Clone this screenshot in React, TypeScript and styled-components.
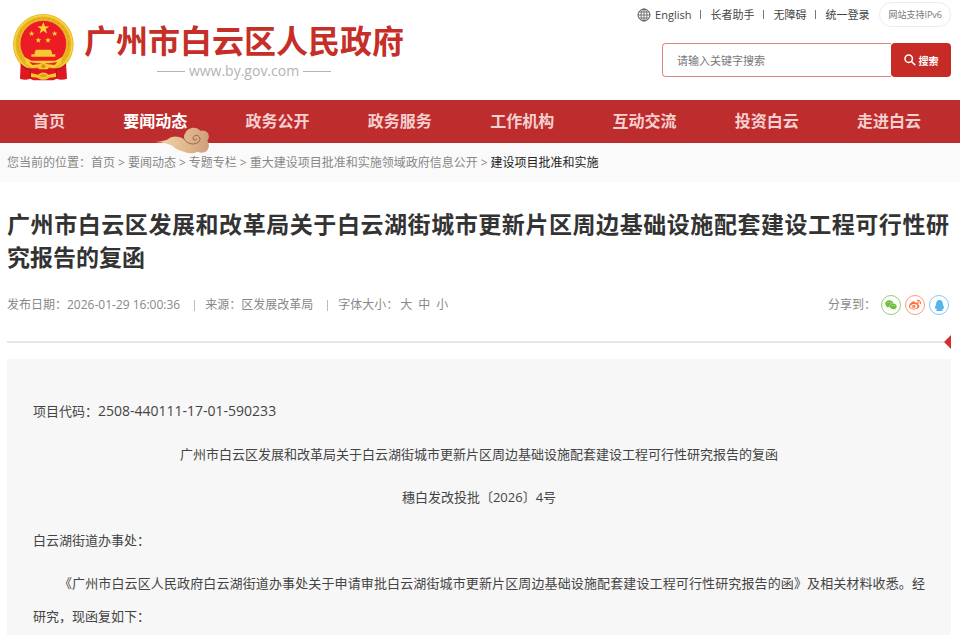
import React from "react";
import styled, { createGlobalStyle } from "styled-components";
import { FaWeixin, FaWeibo, FaQq } from "react-icons/fa";

const GlobalStyle = createGlobalStyle`
  * { box-sizing: border-box; }
  body {
    margin: 0;
    background: #fff;
    color: #444;
    font-family: "Open Sans", "Noto Sans CJK SC", sans-serif;
    font-size: 12px;
    line-height: 20px;
  }
  a { color: inherit; text-decoration: none; }
  button, input { font-family: inherit; }
`;

const Header = styled.header`
  display: flex;
  justify-content: space-between;
  height: 100px;
  padding: 0 9px 0 12px;
`;

const Brand = styled.a`
  display: flex;
  align-items: flex-start;
  gap: 9px;
  padding-top: 13px;
`;

const BrandText = styled.div`
  display: flex;
  flex-direction: column;
  align-items: center;
  padding-top: 8px;
`;

const SiteName = styled.strong`
  color: #c62f28;
  font-size: 32px;
  font-weight: 700;
  line-height: 40px;
  white-space: nowrap;
`;

const SiteUrl = styled.span`
  display: flex;
  align-items: center;
  gap: 4px;
  color: #b3b3b3;
  font-size: 14px;
  line-height: 20px;

  &::before, &::after {
    content: "";
    width: 28px;
    height: 1px;
    background: #b3b3b3;
  }
`;

const HeaderSide = styled.div`
  display: flex;
  flex-direction: column;
  align-items: flex-end;
  gap: 16px;
  padding-top: 2px;
`;

const Tools = styled.nav`
  display: flex;
  align-items: center;
  height: 25px;
  color: #444;
  font-size: 11px;
  white-space: nowrap;
`;

const ToolLink = styled.a`
  display: flex;
  align-items: center;
  gap: 4px;
`;

const ToolBar = styled.span`
  width: 1px;
  height: 9px;
  margin: 0 9px;
  background: #777;
`;

const Ipv6 = styled.a`
  height: 25px;
  margin-left: 10px;
  padding: 0 8px;
  border: 1px solid #ececec;
  border-radius: 13px;
  color: #777;
  font-size: 9px;
  line-height: 23px;
`;

const Search = styled.form`
  display: flex;
  width: 289px;
  height: 34px;
  margin: 0;
`;

const SearchInput = styled.input`
  flex: 1;
  min-width: 0;
  padding: 0 14px;
  border: 1px solid #dc8580;
  border-right: 0;
  border-radius: 4px 0 0 4px;
  outline: 0;
  background: #fff;
  color: #333;
  font-size: 11px;

  &::placeholder { color: #777; opacity: 1; }
`;

const SearchButton = styled.button`
  display: flex;
  align-items: center;
  justify-content: center;
  gap: 3px;
  width: 60px;
  padding: 0;
  border: 0;
  border-radius: 4px;
  background: #c62b25;
  color: #fff;
  font-size: 10px;
  font-weight: 700;
`;

const NavBar = styled.nav`
  display: flex;
  align-items: center;
  justify-content: space-between;
  height: 43px;
  padding: 0 39px 0 33px;
  background: #bd2d2d;
`;

const NavLink = styled.a<{ $active?: boolean }>`
  position: relative;
  color: ${(p) => (p.$active ? "#fff" : "#f6cfcf")};
  font-size: 16px;
  font-weight: 700;
  line-height: 43px;
`;

const NavCloud = styled.span`
  position: absolute;
  left: 32px;
  bottom: -11px;
  display: flex;
`;

const Crumbs = styled.nav`
  display: flex;
  height: 39px;
  padding: 0 7px;
  background: #fafafa;
  color: #888;
  line-height: 39px;
  white-space: nowrap;
`;

const CrumbArrow = styled.span`
  margin: 0 3px;
`;

const Current = styled.span`
  color: #222;
`;

const Article = styled.article`
  padding: 26px 9px 0 7px;
`;

const Title = styled.h1`
  margin: 0;
  padding-right: 2px;
  color: #333;
  font-size: 23px;
  font-weight: 700;
  line-height: 33px;
  text-align: justify;
`;

const Meta = styled.div`
  display: flex;
  align-items: center;
  justify-content: space-between;
  height: 20px;
  margin-top: 21px;
  padding-right: 2px;
  color: #888;
`;

const MetaGroup = styled.div`
  display: flex;
  align-items: center;
`;

const MetaBar = styled.span`
  width: 1px;
  height: 11px;
  margin: 0 10px 0 14px;
  background: #bbb;
`;

const SizeButtons = styled.span`
  display: flex;
  gap: 6px;
  margin-left: 2px;
`;

const SizeButton = styled.button`
  padding: 0;
  border: 0;
  background: none;
  color: inherit;
  font-size: 12px;
  line-height: 20px;
`;

const ShareList = styled.div`
  display: flex;
  gap: 4px;
  margin-left: 5px;
`;

const ShareButton = styled.button<{ $tint: string; $ring: string }>`
  display: flex;
  align-items: center;
  justify-content: center;
  width: 20px;
  height: 20px;
  padding: 0;
  border: 1px solid ${(p) => p.$ring};
  border-radius: 50%;
  background: #fff;
  color: ${(p) => p.$tint};
`;

const Divider = styled.div`
  display: flex;
  align-items: center;
  height: 14px;
  margin-top: 20px;

  &::before {
    content: "";
    flex: 1;
    height: 2px;
    background: #e6e6e6;
  }

  &::after {
    content: "";
    border: solid transparent;
    border-width: 7px 7px 7px 0;
    border-right-color: #d42f2f;
  }
`;

const Body = styled.section`
  margin-top: 10px;
  padding: 35px 26px 24px;
  background: #f7f7f7;
`;

const Paragraph = styled.p<{ $center?: boolean; $indent?: boolean }>`
  margin: 0 0 10px;
  color: #444;
  font-size: 13px;
  line-height: 33px;
  text-align: ${(p) => (p.$center ? "center" : "justify")};
  text-indent: ${(p) => (p.$indent ? "2em" : "0")};
`;

const ProjectCode = styled.span`
  font-size: 14px;
`;

const Star = ({ x, y, r }: { x: number; y: number; r: number }) => {
  const points = Array.from({ length: 10 }, (_, i) => {
    const radius = i % 2 ? r * 0.4 : r;
    const angle = (Math.PI / 5) * i - Math.PI / 2;
    return `${x + radius * Math.cos(angle)},${y + radius * Math.sin(angle)}`;
  }).join(" ");
  return <polygon points={points} fill="#fbd535" />;
};

const Emblem = () => (
  <svg width="63" height="69" viewBox="36 39 189 207" aria-hidden="true">
    <circle cx="130" cy="133" r="91" fill="#e8b41f" />
    <circle cx="130" cy="133" r="86" fill="none" stroke="#f6d341" strokeWidth="5" />
    <circle cx="130" cy="131" r="76" fill="none" stroke="#d9a017" strokeWidth="3" strokeDasharray="9 7" />
    <circle cx="130" cy="131" r="70" fill="#ec1c24" stroke="#f5cf36" strokeWidth="2" />
    <path d="M62 190 Q78 208 96 205 H164 Q182 208 198 190 L201 236 Q184 242 170 236 L160 241 H100 L90 236 Q76 242 60 236Z" fill="#dd1820" />
    <path d="M62 192 Q80 211 92 207 L91 235 M198 192 Q180 211 168 207 L169 235" fill="none" stroke="#b4121b" strokeWidth="3" />
    <Star x={130} y={85} r={19} />
    <Star x={95} y={101} r={9} />
    <Star x={164} y={101} r={9} />
    <Star x={115} y={121} r={9} />
    <Star x={144} y={121} r={9} />
    <path d="M108 149 H152 L156 157 V163 H166 V170 H94 V163 H104 V157Z" fill="#f5c92f" />
    <path d="M72 170 L94 182 H166 L188 170 L182 192 L160 205 L146 199 H114 L100 205 L78 192Z" fill="#f6ce36" />
    <path d="M88 186 L112 190 H148 L172 186 L164 195 L144 193 H116 L97 195Z" fill="#e72221" />
    <path d="M113 200 Q116 189 130 188 Q144 189 147 200 L143 208 H117Z" fill="#f5c92f" />
    <circle cx="130" cy="199" r="6" fill="#df8b1c" />
    <path d="M93 219 L114 224 Q130 211 146 224 L168 219 V231 L148 233 Q130 246 112 233 L93 231Z" fill="#f3c62c" />
    <path d="M117 227 Q130 217 143 227 Q130 235 117 227Z" fill="#e79c1c" />
  </svg>
);

const Cloud = () => (
  <svg width="55" height="27" viewBox="465 111 165 81" aria-hidden="true">
    <defs>
      <linearGradient id="cloudFill" x1="0" x2="1">
        <stop offset="0" stopColor="#f0d3a8" />
        <stop offset="0.5" stopColor="#e3bd92" />
        <stop offset="1" stopColor="#cf9f7c" />
      </linearGradient>
    </defs>
    <path
      d="M466 156 Q486 155 501 149 Q516 137 530 140 Q542 139 552 148 Q551 118 578 113 Q593 112 601 122 Q615 120 624 129 Q630 143 622 151 Q632 169 621 182 Q609 192 593 185 Q574 194 552 185 Q532 182 519 169 Q505 158 466 156Z"
      fill="url(#cloudFill)"
    />
    <path
      d="M552 146 Q560 162 580 162 Q600 160 600 146 Q597 133 584 137 Q576 142 581 150 Q587 153 589 147"
      fill="none"
      stroke="#a5644d"
      strokeWidth="3"
      strokeLinecap="round"
    />
  </svg>
);

const Globe = () => (
  <svg width="14" height="14" viewBox="0 0 14 14" fill="none" stroke="#555" aria-hidden="true">
    <circle cx="7" cy="7" r="6" />
    <ellipse cx="7" cy="7" rx="3" ry="6" strokeWidth="0.8" />
    <path d="M7 1V13M1 7H13M2 4H12M2 10H12" strokeWidth="0.8" />
  </svg>
);

const Magnifier = () => (
  <svg width="12" height="12" viewBox="0 0 12 12" fill="none" stroke="#fff" strokeWidth="1.5" aria-hidden="true">
    <circle cx="4.7" cy="4.7" r="3.7" />
    <path d="M7.4 7.4L11.3 11.3" />
  </svg>
);

const navItems = ["首页", "要闻动态", "政务公开", "政务服务", "工作机构", "互动交流", "投资白云", "走进白云"];
const crumbs = ["首页", "要闻动态", "专题专栏", "重大建设项目批准和实施领域政府信息公开"];
const tools = ["长者助手", "无障碍", "统一登录"];

export default function App() {
  return (
    <>
      <GlobalStyle />
      <Header>
        <Brand href="#">
          <Emblem />
          <BrandText>
            <SiteName>广州市白云区人民政府</SiteName>
            <SiteUrl>www.by.gov.com</SiteUrl>
          </BrandText>
        </Brand>
        <HeaderSide>
          <Tools aria-label="工具">
            <ToolLink href="#"><Globe />English</ToolLink>
            {tools.map((t) => (
              <React.Fragment key={t}>
                <ToolBar />
                <ToolLink href="#">{t}</ToolLink>
              </React.Fragment>
            ))}
            <Ipv6 href="#">网站支持IPv6</Ipv6>
          </Tools>
          <Search onSubmit={(e) => e.preventDefault()}>
            <SearchInput type="text" aria-label="搜索" placeholder="请输入关键字搜索" />
            <SearchButton type="submit"><Magnifier />搜索</SearchButton>
          </Search>
        </HeaderSide>
      </Header>
      <NavBar aria-label="主导航">
        {navItems.map((item) => {
          const active = item === "要闻动态";
          return (
            <NavLink key={item} href="#" $active={active}>
              {item}
              {active && <NavCloud><Cloud /></NavCloud>}
            </NavLink>
          );
        })}
      </NavBar>
      <Crumbs aria-label="当前位置">
        <span>您当前的位置：</span>
        {crumbs.map((c) => (
          <React.Fragment key={c}>
            <a href="#">{c}</a>
            <CrumbArrow>&gt;</CrumbArrow>
          </React.Fragment>
        ))}
        <Current>建设项目批准和实施</Current>
      </Crumbs>
      <Article>
        <Title>广州市白云区发展和改革局关于白云湖街城市更新片区周边基础设施配套建设工程可行性研究报告的复函</Title>
        <Meta>
          <MetaGroup>
            <span>发布日期：2026-01-29 16:00:36</span>
            <MetaBar />
            <span>来源：区发展改革局</span>
            <MetaBar />
            <span>字体大小：</span>
            <SizeButtons>
              <SizeButton type="button">大</SizeButton>
              <SizeButton type="button">中</SizeButton>
              <SizeButton type="button">小</SizeButton>
            </SizeButtons>
          </MetaGroup>
          <MetaGroup>
            <span>分享到：</span>
            <ShareList>
              <ShareButton type="button" aria-label="微信" $tint="#6cbf3f" $ring="#8fd070"><FaWeixin size={12} /></ShareButton>
              <ShareButton type="button" aria-label="微博" $tint="#ff6a36" $ring="#ff9a78"><FaWeibo size={12} /></ShareButton>
              <ShareButton type="button" aria-label="QQ" $tint="#55b4ea" $ring="#84caf1"><FaQq size={11} /></ShareButton>
            </ShareList>
          </MetaGroup>
        </Meta>
        <Divider />
        <Body>
          <Paragraph>项目代码：<ProjectCode>2508-440111-17-01-590233</ProjectCode></Paragraph>
          <Paragraph $center>广州市白云区发展和改革局关于白云湖街城市更新片区周边基础设施配套建设工程可行性研究报告的复函</Paragraph>
          <Paragraph $center>穗白发改投批〔2026〕4号</Paragraph>
          <Paragraph>白云湖街道办事处：</Paragraph>
          <Paragraph $indent>《广州市白云区人民政府白云湖街道办事处关于申请审批白云湖街城市更新片区周边基础设施配套建设工程可行性研究报告的函》及相关材料收悉。经研究，现函复如下：</Paragraph>
        </Body>
      </Article>
    </>
  );
}
